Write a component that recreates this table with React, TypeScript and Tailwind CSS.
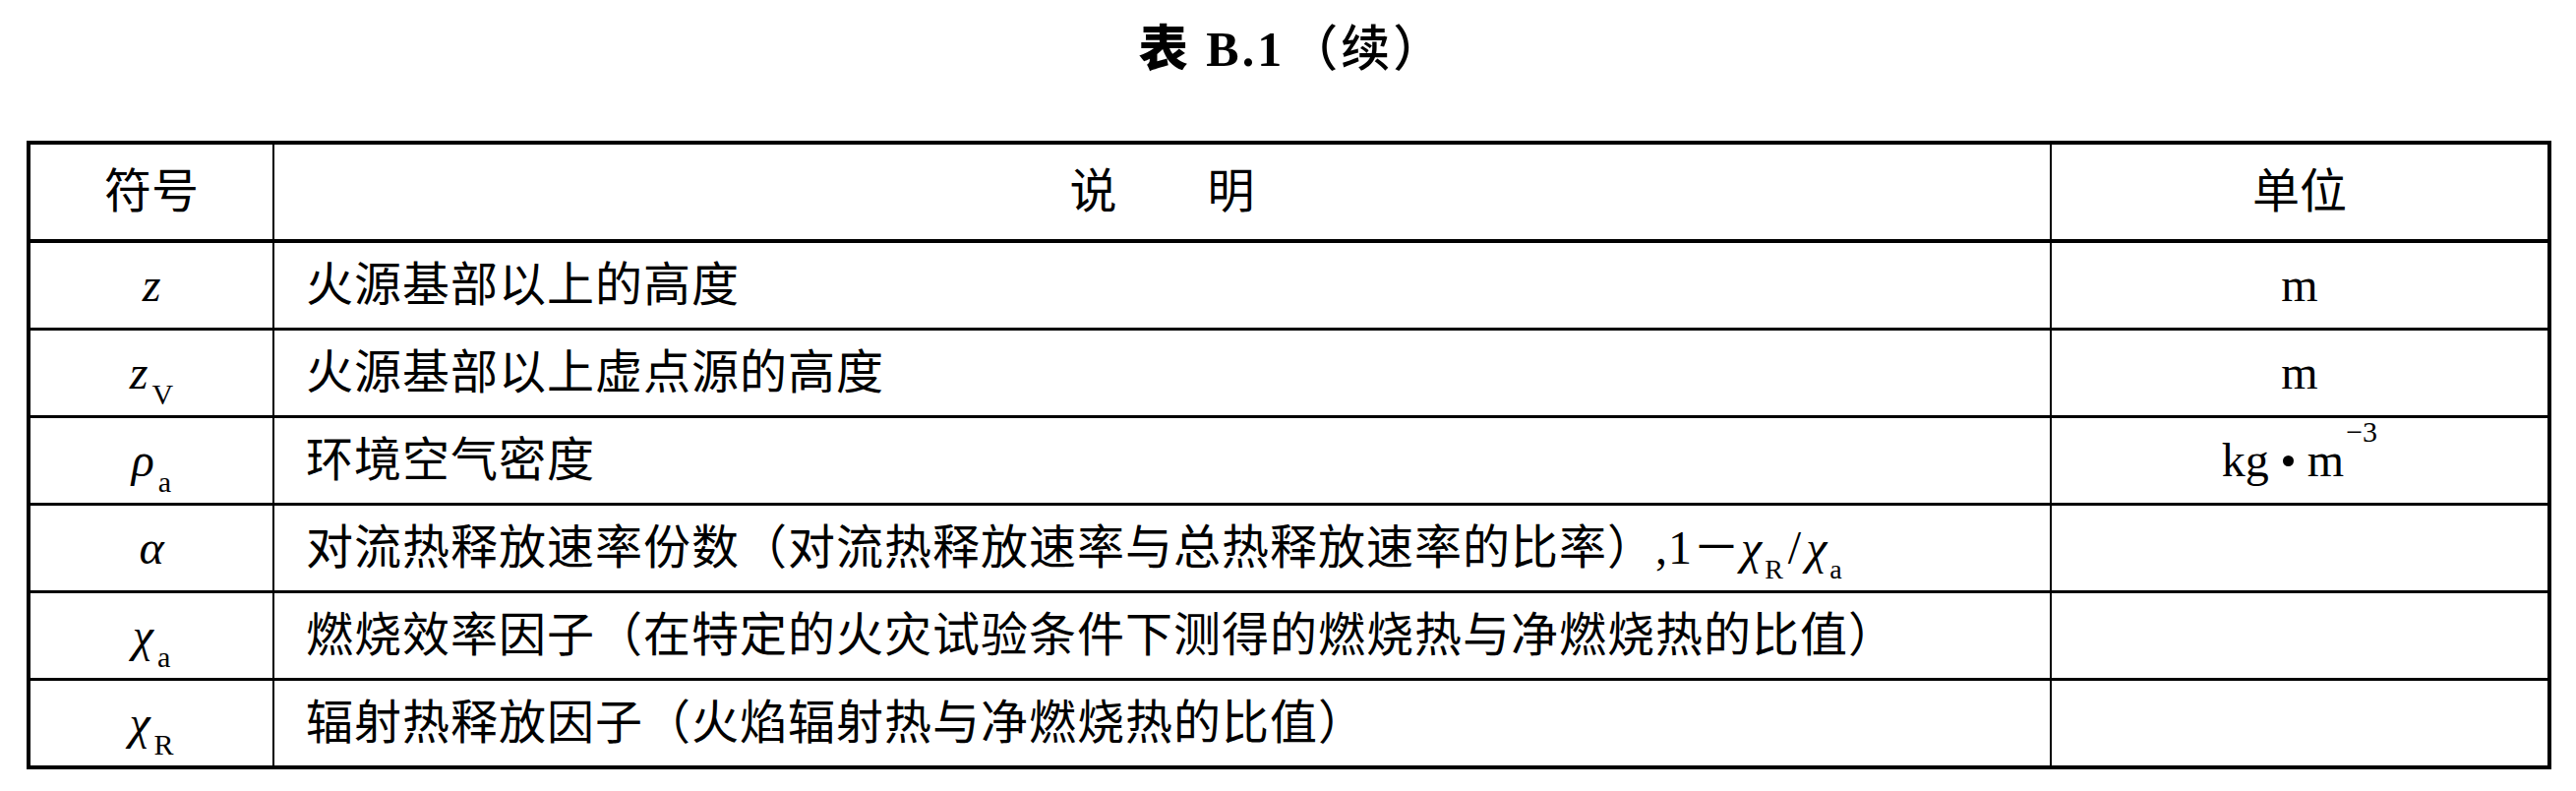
const rows = [
  { sym: 'z', sub: '', desc: '火源基部以上的高度', unit: 'm' },
  { sym: 'z', sub: 'V', desc: '火源基部以上虚点源的高度', unit: 'm' },
  { sym: 'ρ', sub: 'a', desc: '环境空气密度', unit: 'kg' },
  { sym: 'α', sub: '', desc: 'alpha', unit: '' },
  { sym: 'χ', sub: 'a', desc: '燃烧效率因子（在特定的火灾试验条件下测得的燃烧热与净燃烧热的比值）', unit: '' },
  { sym: 'χ', sub: 'R', desc: '辐射热释放因子（火焰辐射热与净燃烧热的比值）', unit: '' },
]

function Symbol({ sym, sub }: { sym: string; sub: string }) {
  return (
    <span className="whitespace-nowrap">
      <span className="italic text-[48px]">{sym}</span>
      {sub && <sub className="text-[30px] not-italic ml-[4px] align-[-8px]">{sub}</sub>}
    </span>
  )
}

function Desc({ text }: { text: string }) {
  if (text === 'alpha') {
    return (
      <span>
        对流热释放速率份数（对流热释放速率与总热释放速率的比率）,1－
        <span className="italic">χ</span>
        <sub className="text-[28px] ml-[2px] align-[-8px]">R</sub>
        <span className="mx-[4px]">/</span>
        <span className="italic">χ</span>
        <sub className="text-[28px] ml-[2px] align-[-8px]">a</sub>
      </span>
    )
  }
  return <span>{text}</span>
}

function Unit({ unit }: { unit: string }) {
  if (unit === 'kg') {
    return (
      <span className="whitespace-nowrap inline-flex items-center">
        <span>kg</span>
        <span className="mx-[14px] inline-block w-[11px] h-[11px] rounded-full bg-black" />
        <span>m</span>
        <sup className="text-[30px] ml-[2px] -translate-y-[14px]">−3</sup>
      </span>
    )
  }
  return <span>{unit}</span>
}

export default function App() {
  return (
    <div className="w-[2619px] h-[804px] bg-white text-black font-['Liberation_Serif','Noto_Sans_CJK_SC',serif]">
      <div className="h-[143px] pt-[20px] flex justify-center">
        <h1 className="text-[50px] font-bold leading-none tracking-[3px] pl-[8px]">
          <span className="font-['Noto_Sans_CJK_SC',sans-serif] font-black">表</span> B.1
          <span className="font-['Noto_Sans_CJK_SC',sans-serif] font-medium ml-[4px]">（续）</span>
        </h1>
      </div>

      <div className="ml-[27px] w-[2567px] border-[4px] border-black">
        <div className="flex h-[100px] border-b-[4px] border-black text-[48px]">
          <div className="w-[248px] border-r-2 border-black flex items-center justify-center">符号</div>
          <div className="w-[1807px] border-r-2 border-black flex items-center justify-center gap-[92px]">
            <span>说</span>
            <span>明</span>
          </div>
          <div className="flex-1 flex items-center justify-center">单位</div>
        </div>

        {rows.map((r, i) => (
          <div
            key={i}
            className={`flex text-[48px] ${i < rows.length - 1 ? 'h-[89px] border-b-[3px] border-black' : 'h-[86px]'}`}
          >
            <div className="w-[248px] border-r-2 border-black flex items-center justify-center">
              <Symbol sym={r.sym} sub={r.sub} />
            </div>
            <div className="w-[1807px] border-r-2 border-black flex items-center pl-[32px] whitespace-nowrap tracking-[1px]">
              <Desc text={r.desc} />
            </div>
            <div className="flex-1 flex items-center justify-center">
              <Unit unit={r.unit} />
            </div>
          </div>
        ))}
      </div>
    </div>
  )
}
